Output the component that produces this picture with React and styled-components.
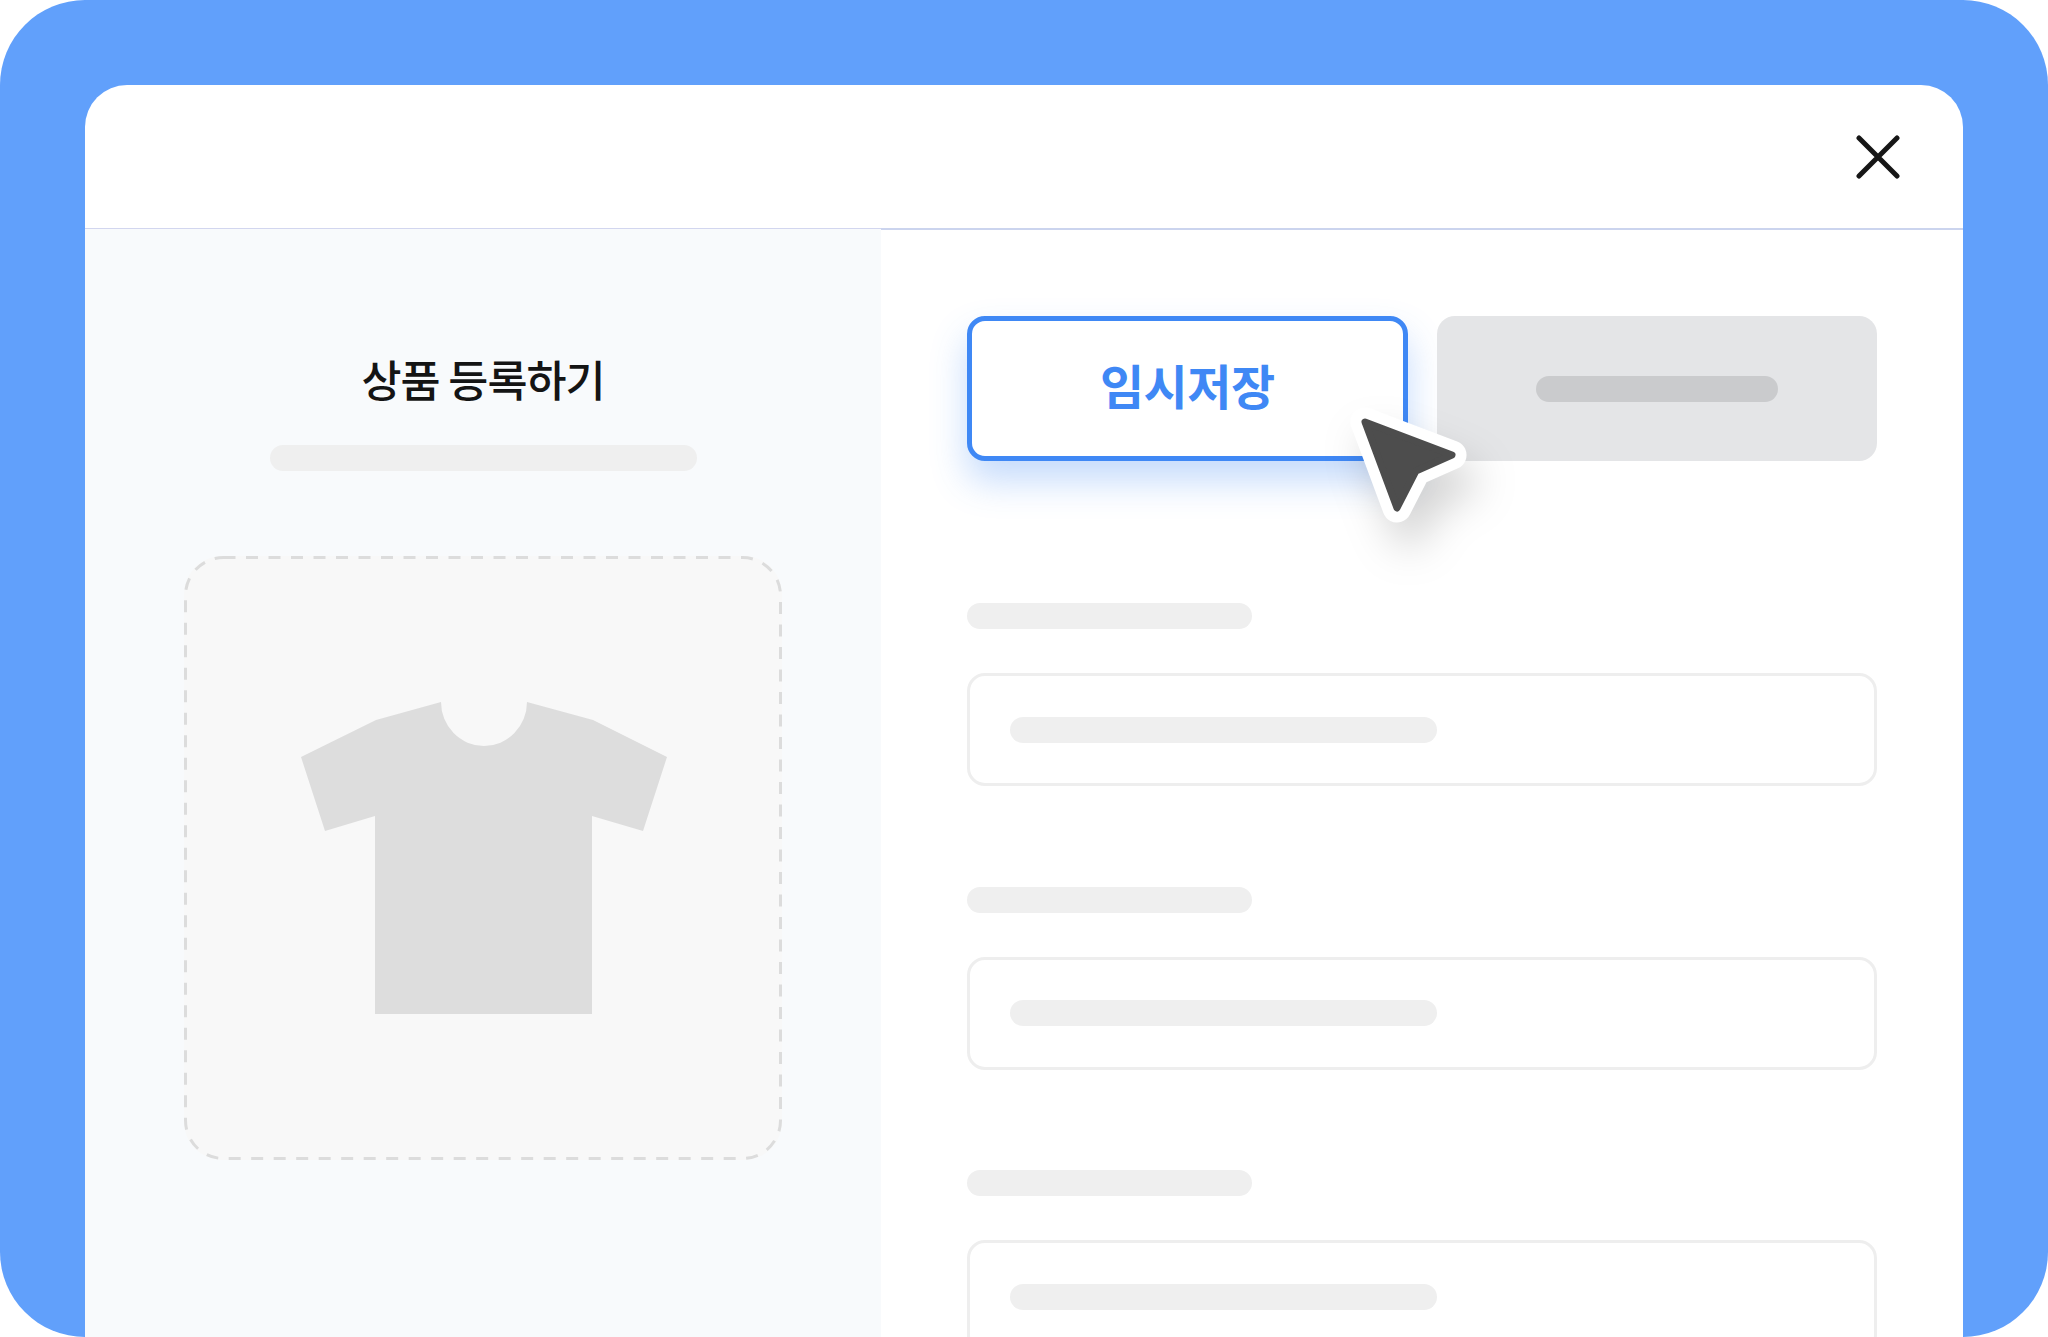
import styled, { createGlobalStyle } from 'styled-components';

const GlobalStyle = createGlobalStyle`
  html, body {
    margin: 0;
    background: #ffffff;
  }
  body {
    font-family: "Noto Sans CJK KR", "Noto Sans", sans-serif;
  }
`;

const Frame = styled.div`
  width: 2048px;
  height: 1337px;
  box-sizing: border-box;
  padding: 85px 85px 0;
  background: #61a0fb;
  border-radius: 85px;
  overflow: hidden;
`;

const Modal = styled.div`
  height: 100%;
  display: flex;
  flex-direction: column;
  background: #ffffff;
  border-radius: 42px 42px 0 0;
  overflow: hidden;
`;

const Header = styled.div`
  height: 143px;
  flex: none;
  display: flex;
  align-items: center;
  justify-content: flex-end;
  padding-right: 63px;
  box-sizing: border-box;
`;

const CloseIcon = styled.svg`
  width: 44px;
  height: 44px;
  margin-top: 1px;
  stroke: #161616;
  stroke-width: 5;
  stroke-linecap: round;
  fill: none;
`;

const Body = styled.div`
  flex: 1;
  min-height: 0;
  display: grid;
  grid-template-columns: 796px 1fr;
`;

const LeftPanel = styled.div`
  display: flex;
  flex-direction: column;
  align-items: center;
  background: #f8fafc;
  border-top: 1px solid #d2d6ef;
`;

const Title = styled.h1`
  margin: 119px 0 0;
  height: 62px;
  font-size: 43.5px;
  line-height: 62px;
  font-weight: 500;
  letter-spacing: -1px;
  color: #141414;
`;

const Bar = styled.div`
  flex: none;
  width: ${(p) => p.$w}px;
  height: 26px;
  border-radius: 13px;
  background: ${(p) => p.$color || '#efefef'};
`;

const SubBar = styled(Bar)`
  margin-top: 35px;
`;

const DropZone = styled.div`
  position: relative;
  margin-top: 85px;
  width: 598px;
  height: 604px;
  display: flex;
  align-items: center;
  justify-content: center;
  background: #f8f8f8;
  border-radius: 38px;
`;

const DashedOutline = styled.svg`
  position: absolute;
  inset: 0;
  width: 100%;
  height: 100%;
  fill: none;
  stroke: #dcdcdc;
  stroke-width: 3;
  stroke-dasharray: 12 10.5;
`;

const Shirt = styled.svg`
  width: 366px;
  height: 312px;
  margin-left: 2px;
  fill: #dddddd;
`;

const RightPanel = styled.div`
  padding: 86px 86px 0 86px;
  border-top: 2px solid #cbd4ee;
  margin-bottom: -200px;
`;

const ButtonRow = styled.div`
  position: relative;
  display: grid;
  grid-template-columns: 1fr 1fr;
  gap: 29px;
  height: 145px;
`;

const SaveButton = styled.button`
  margin: 0;
  padding: 0 0 10px;
  box-sizing: border-box;
  border: 5px solid #3f88f5;
  border-radius: 18px;
  background: #ffffff;
  box-shadow: 0 20px 36px rgba(63, 136, 245, 0.3);
  color: #3f88f5;
  font-family: inherit;
  font-size: 48px;
  line-height: 1;
  font-weight: 700;
  letter-spacing: -0.5px;
`;

const GhostButton = styled.div`
  display: flex;
  align-items: center;
  justify-content: center;
  background: #e4e5e7;
  border-radius: 18px;
`;

const Cursor = styled.svg`
  position: absolute;
  left: 372px;
  top: 83px;
  width: 150px;
  height: 150px;
  overflow: visible;
  filter: drop-shadow(12px 26px 20px rgba(0, 0, 0, 0.17));
`;

const Form = styled.div`
  margin-top: 142px;
  display: flex;
  flex-direction: column;
  gap: 100.5px;
`;

const Field = styled.div`
  display: flex;
  flex-direction: column;
  gap: 44px;
`;

const InputBox = styled.div`
  height: 113px;
  box-sizing: border-box;
  display: flex;
  align-items: center;
  padding-left: 40px;
  border: 3px solid #eeeeee;
  border-radius: 18px;
`;

const fields = [0, 1, 2];
const cursorPath = 'M26 23 L113 56 L77 72 L58 109 Z';

export default function App() {
  return (
    <>
      <GlobalStyle />
      <Frame>
        <Modal>
          <Header>
            <CloseIcon viewBox="0 0 44 44">
              <path d="M3 3 L41 41 M41 3 L3 41" />
            </CloseIcon>
          </Header>
          <Body>
            <LeftPanel>
              <Title>상품 등록하기</Title>
              <SubBar $w={427} />
              <DropZone>
                <DashedOutline viewBox="0 0 598 604">
                  <rect x="1.5" y="1.5" width="595" height="601" rx="38" />
                </DashedOutline>
                <Shirt viewBox="0 0 366 312">
                  <path d="M140 0 A43 44 0 0 0 226 0 L292 18 L366 55 L342 129 L291 114 L291 312 L74 312 L74 114 L24 129 L0 55 L75 18 Z" />
                </Shirt>
              </DropZone>
            </LeftPanel>
            <RightPanel>
              <ButtonRow>
                <SaveButton>임시저장</SaveButton>
                <GhostButton>
                  <Bar $w={242} $color="#cacbcd" />
                </GhostButton>
                <Cursor viewBox="0 0 150 150">
                  <path d={cursorPath} fill="#ffffff" stroke="#ffffff" strokeWidth="29" strokeLinejoin="round" />
                  <path d={cursorPath} fill="#4d4d4d" stroke="#4d4d4d" strokeWidth="7" strokeLinejoin="round" />
                </Cursor>
              </ButtonRow>
              <Form>
                {fields.map((id) => (
                  <Field key={id}>
                    <Bar $w={285} />
                    <InputBox>
                      <Bar $w={427} />
                    </InputBox>
                  </Field>
                ))}
              </Form>
            </RightPanel>
          </Body>
        </Modal>
      </Frame>
    </>
  );
}
